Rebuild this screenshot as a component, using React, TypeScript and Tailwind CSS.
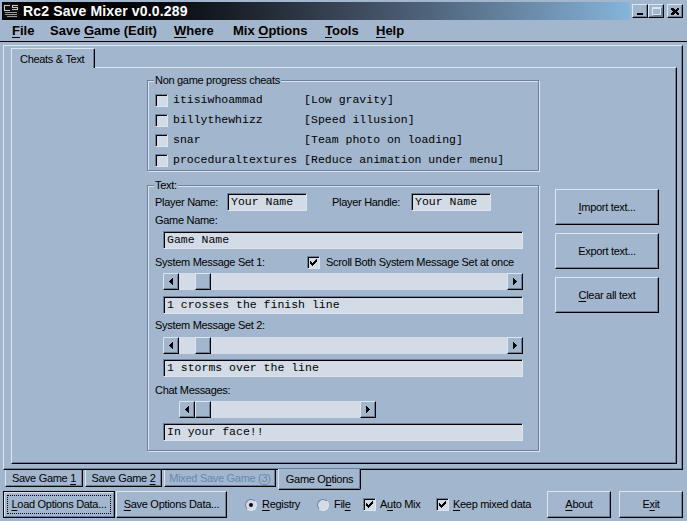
import React from 'react';

const bg = 'bg-[#a2b6cd]';
const raised =
  'border border-t-[#dce6f0] border-l-[#dce6f0] border-r-black border-b-black shadow-[inset_-1px_-1px_0_#6b809a]';
const sunken =
  'border border-t-[#6b809a] border-l-[#6b809a] border-r-[#dce6f0] border-b-[#dce6f0] shadow-[inset_1px_1px_0_#000]';
const field = `${sunken} bg-[#d3dce6] h-[18px] flex items-center pl-[3px] font-['Liberation_Mono',monospace] text-[11.5px] tracking-normal text-black whitespace-pre`;

const U = ({ children }: { children: React.ReactNode }) => (
  <span className="underline decoration-1 underline-offset-[2px]">{children}</span>
);

const CheckBox = ({ checked }: { checked?: boolean }) => (
  <span className={`w-[13px] h-[13px] shrink-0 bg-[#d3dce6] ${sunken} flex items-center justify-center`}>
    {checked && (
      <svg width="7" height="7" viewBox="0 0 7 7" shapeRendering="crispEdges">
        <path d="M6 0h1v3h-1v1h-1v1h-1v1h-1v1h-1v-1h-1v-1h-1v-3h1v1h1v1h1v-1h1v-1h1z" fill="#000" />
      </svg>
    )}
  </span>
);

const Radio = ({ on }: { on?: boolean }) => (
  <span className="w-[12px] h-[12px] shrink-0 rounded-full bg-[#d3dce6] border border-t-[#6b809a] border-l-[#6b809a] border-r-[#dce6f0] border-b-[#dce6f0] flex items-center justify-center">
    {on && <span className="w-[4px] h-[4px] rounded-full bg-black" />}
  </span>
);

const Arrow = ({ dir }: { dir: 'left' | 'right' }) => (
  <div className={`w-[16px] h-full ${bg} ${raised} flex items-center justify-center`}>
    <svg width="4" height="7" viewBox="0 0 4 7" shapeRendering="crispEdges">
      {dir === 'left' ? (
        <path d="M3 0h1v7h-1v-1h-1v-1h-1v-1h-1v-1h1v-1h1v-1h1z" fill="#000" />
      ) : (
        <path d="M0 0h1v1h1v1h1v1h1v1h-1v1h-1v1h-1v1h-1z" fill="#000" />
      )}
    </svg>
  </div>
);

const ScrollBar = ({ className, gap = true }: { className: string; gap?: boolean }) => (
  <div className={`flex h-[17px] bg-[#d3dce6] ${className}`}>
    <Arrow dir="left" />
    {gap && <div className="w-[16px]" />}
    <div className={`w-[16px] h-full ${bg} ${raised}`} />
    <div className="flex-1" />
    <Arrow dir="right" />
  </div>
);

const Group = ({ title, className, children }: { title: string; className: string; children: React.ReactNode }) => (
  <div
    className={`relative w-[392px] border border-[#6b809a] shadow-[1px_1px_0_#dce6f0,inset_1px_1px_0_#dce6f0] ${className}`}
  >
    <span className={`absolute -top-[7px] left-[6px] px-[1px] leading-[13px] ${bg}`}>{title}</span>
    {children}
  </div>
);

const cheats = [
  'itisiwhoammad      [Low gravity]',
  'billythewhizz      [Speed illusion]',
  'snar               [Team photo on loading]',
  'proceduraltextures [Reduce animation under menu]',
];

export default function App() {
  return (
    <div
      className={`w-[687px] h-[521px] ${bg} flex flex-col overflow-hidden font-['Liberation_Sans',Arial,sans-serif] text-[11px] tracking-[-0.3px] text-black`}
    >
      {/* title bar */}
      <div className="h-[20px] pt-[2px] px-[2px] flex">
        <div className="flex-1 flex items-center gap-[4px] pl-[1px] bg-linear-to-r from-black from-[8%] via-[#3b4759] via-[55%] to-[#86b4da]">
          <svg width="16" height="14" viewBox="0 0 16 14" shapeRendering="crispEdges">
            <rect width="16" height="14" fill="#111" />
            <path d="M1 1h6v1h-5v4h5v1h-6z" fill="#c8c8c8" />
            <path d="M9 1h6v1h-5v1h5v3h-6v-1h5v-1h-5z" fill="#c8c8c8" />
            <path d="M2 8h12v1h-12zM2 10h12v1h-12zM4 12h10v1h-10z" fill="#9a9a9a" />
          </svg>
          <span className="text-white font-bold text-[14px] tracking-[0.15px]">Rc2 Save Mixer v0.0.289</span>
        </div>
        <div className="w-[55px] flex items-start pt-[2px]">
          <div className={`ml-[2px] w-[16px] h-[14px] ${bg} ${raised} flex items-end justify-center pb-[2px]`}>
            <span className="w-[6px] h-[2px] bg-black" />
          </div>
          <div className={`w-[16px] h-[14px] ${bg} ${raised} flex items-center justify-center`}>
            <span className="w-[9px] h-[8px] border border-t-2 border-[#dce6f0] shadow-[1px_1px_0_#6b809a]" />
          </div>
          <div className={`ml-[3px] w-[16px] h-[14px] ${bg} ${raised} flex items-center justify-center`}>
            <svg width="8" height="7" viewBox="0 0 8 7" shapeRendering="crispEdges">
              <path d="M0 0h2l2 2 2-2h2v1l-2 2.5 2 2.5v1h-2l-2-2-2 2h-2v-1l2-2.5-2-2.5z" fill="#000" />
            </svg>
          </div>
        </div>
      </div>

      {/* menu */}
      <div className="h-[22px] border-b border-black flex items-center pl-[12px] font-bold text-[13px] tracking-[0px]">
        <span className="w-[38px]"><U>F</U>ile</span>
        <span className="w-[124px]">Save <U>G</U>ame (Edit)</span>
        <span className="w-[59px]"><U>W</U>here</span>
        <span className="w-[92px]">Mix <U>O</U>ptions</span>
        <span className="w-[51px]"><U>T</U>ools</span>
        <span><U>H</U>elp</span>
      </div>

      {/* outer tab panel */}
      <div
        className={`mt-[3px] ml-[3px] w-[680px] h-[425px] flex flex-col pt-[2px] pl-[7px] pr-[5px] pb-[5px] border border-t-[#dce6f0] border-l-[#dce6f0] border-r-black border-b-black shadow-[inset_-1px_-1px_0_#6b809a]`}
      >
        <div
          className={`relative z-10 -mb-[1px] w-[84px] h-[20px] ${bg} border-t border-l border-r border-t-[#dce6f0] border-l-[#dce6f0] border-r-black rounded-tr-[2px] shadow-[inset_-1px_0_0_#6b809a] flex items-center pl-[8px] pt-[2px]`}
        >
          Cheats &amp; Text
        </div>
        <div className="flex-1 flex border border-t-[#dce6f0] border-l-[#dce6f0] border-r-black border-b-black shadow-[inset_-1px_-1px_0_#6b809a]">
          <div className="ml-[135px] flex flex-col">
            <Group title="Non game progress cheats" className="mt-[12px] h-[91px] pt-[9px] pl-[7px]">
              {cheats.map((c) => (
                <div key={c} className="h-[20px] flex items-center gap-[5px]">
                  <CheckBox />
                  <span className="font-['Liberation_Mono',monospace] text-[11.5px] tracking-normal whitespace-pre">{c}</span>
                </div>
              ))}
            </Group>

            <Group title="Text:" className="mt-[14px] h-[266px] pt-[7px] pl-[7px] flex flex-col">
              <div className="h-[18px] flex items-center">
                <span className="w-[72px]">Player Name:</span>
                <div className={`w-[80px] ${field}`}>Your Name</div>
                <span className="ml-[25px] w-[79px]">Player Handle:</span>
                <div className={`w-[80px] ${field}`}>Your Name</div>
              </div>
              <div className="mt-[2px] h-[14px] leading-[14px]">Game Name:</div>
              <div className={`mt-[4px] ml-[8px] w-[360px] ${field}`}>Game Name</div>
              <div className="mt-[6px] h-[14px] flex items-center">
                <span className="w-[152px]">System Message Set 1:</span>
                <CheckBox checked />
                <span className="ml-[6px]">Scroll Both System Message Set at once</span>
              </div>
              <ScrollBar className="mt-[4px] ml-[8px] w-[360px]" />
              <div className={`mt-[6px] ml-[8px] w-[360px] ${field}`}>1 crosses the finish line</div>
              <div className="mt-[4px] h-[14px] leading-[14px]">System Message Set 2:</div>
              <ScrollBar className="mt-[5px] ml-[8px] w-[360px]" />
              <div className={`mt-[5px] ml-[8px] w-[360px] ${field}`}>1 storms over the line</div>
              <div className="mt-[6px] h-[14px] leading-[14px]">Chat Messages:</div>
              <ScrollBar className="mt-[4px] ml-[24px] w-[197px]" gap={false} />
              <div className={`mt-[5px] ml-[8px] w-[360px] ${field}`}>In your face!!</div>
            </Group>
          </div>

          <div className="ml-[16px] mt-[121px] flex flex-col gap-[8px]">
            <button className={`w-[104px] h-[36px] ${bg} ${raised}`}>
              <U>I</U>mport text...
            </button>
            <button className={`w-[104px] h-[36px] ${bg} ${raised}`}>Export text...</button>
            <button className={`w-[104px] h-[36px] ${bg} ${raised}`}>
              <U>C</U>lear all text
            </button>
          </div>
        </div>
      </div>

      {/* bottom tabs */}
      <div className="h-[20px] flex items-start pl-[5px] gap-[2px]">
        <div className="w-[78px] h-[17px] flex items-center justify-center border-l border-r border-b border-l-[#dce6f0] border-r-black border-b-black shadow-[inset_-1px_-1px_0_#6b809a]">
          <span>Save Game <U>1</U></span>
        </div>
        <div className="w-[77px] h-[17px] flex items-center justify-center border-l border-r border-b border-l-[#dce6f0] border-r-black border-b-black shadow-[inset_-1px_-1px_0_#6b809a]">
          <span>Save Game <U>2</U></span>
        </div>
        <div className="w-[112px] h-[17px] flex items-center justify-center text-[#6888ae] border-l border-r border-b border-l-[#dce6f0] border-r-black border-b-black shadow-[inset_-1px_-1px_0_#6b809a]">
          <span>Mixed Save Game (<U>3</U>)</span>
        </div>
        <div
          className={`relative z-10 -mt-[1px] w-[83px] h-[21px] ${bg} flex items-center justify-center pt-[1px] border-l border-r border-b border-l-[#dce6f0] border-r-black border-b-black rounded-br-[2px] shadow-[inset_-1px_-1px_0_#6b809a]`}
        >
          <span>Game O<U>p</U>tions</span>
        </div>
      </div>

      {/* bottom buttons */}
      <div className="mt-[1px] h-[27px] flex items-stretch pl-[3px]">
        <div className="w-[112px] border border-black">
          <div className="h-full border border-t-[#dce6f0] border-l-[#dce6f0] border-r-[#6b809a] border-b-[#6b809a] p-[2px]">
            <div className="h-full border border-dotted border-black flex items-center justify-center">
              <span><U>L</U>oad Options Data...</span>
            </div>
          </div>
        </div>
        <button className={`ml-[1px] w-[111px] ${bg} ${raised}`}>
          <U>S</U>ave Options Data...
        </button>
        <div className="ml-[18px] w-[72px] flex items-center gap-[5px]">
          <Radio on />
          <span><U>R</U>egistry</span>
        </div>
        <div className="w-[46px] flex items-center gap-[5px]">
          <Radio />
          <span>Fil<U>e</U></span>
        </div>
        <div className="w-[73px] flex items-center gap-[4px]">
          <CheckBox checked />
          <span>A<U>u</U>to Mix</span>
        </div>
        <div className="w-[111px] flex items-center gap-[4px]">
          <CheckBox checked />
          <span><U>K</U>eep mixed data</span>
        </div>
        <button className={`w-[64px] ${bg} ${raised}`}>
          <U>A</U>bout
        </button>
        <button className={`ml-[8px] w-[64px] ${bg} ${raised}`}>
          E<U>x</U>it
        </button>
      </div>
    </div>
  );
}
